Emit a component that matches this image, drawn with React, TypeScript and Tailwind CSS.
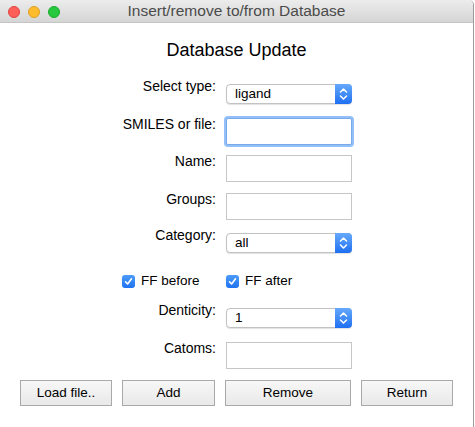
import React from "react";

const font = { fontFamily: '"Liberation Sans", Arial, sans-serif' };

function Select({ value }: { value: string }) {
  return (
    <div className="relative h-[20px] w-[126px] rounded-[4px] border border-[#c2c2c2] bg-white shadow-[0_1px_1px_rgba(0,0,0,0.12)] flex items-center">
      <span className="pl-[8px] text-[13.5px] leading-[16px] text-black">{value}</span>
      <div className="absolute right-[-1px] top-[-1px] h-[20px] w-[17px] rounded-r-[4px] bg-gradient-to-b from-[#65a9fb] to-[#1d6ff2] flex items-center justify-center">
        <svg width="9" height="14" viewBox="0 0 9 14" fill="none">
          <path d="M1.5 5 L4.5 2 L7.5 5" stroke="white" strokeWidth="1.5" strokeLinecap="round" strokeLinejoin="round" />
          <path d="M1.5 9 L4.5 12 L7.5 9" stroke="white" strokeWidth="1.5" strokeLinecap="round" strokeLinejoin="round" />
        </svg>
      </div>
    </div>
  );
}

function Input({ focused }: { focused?: boolean }) {
  return focused ? (
    <div className="h-[27px] w-[126px] rounded-[2px] border border-[#7aa9ea] bg-white shadow-[0_0_0_2px_#93c0f8]" />
  ) : (
    <div className="h-[27px] w-[126px] border border-[#c6c6c6] bg-white" />
  );
}

function Row({
  label,
  children,
  mt,
  select,
}: {
  label: string;
  children: React.ReactNode;
  mt: string;
  select?: boolean;
}) {
  return (
    <div className={`grid grid-cols-[196px_126px] gap-x-[10px] items-start pl-[20px] ${mt}`}>
      <div
        className={`text-right text-[14px] leading-[16px] text-black ${
          select ? "-mt-[6px]" : "-mt-[2px]"
        }`}
      >
        {label}
      </div>
      {children}
    </div>
  );
}

function Check({ label }: { label: string }) {
  return (
    <div className="flex items-center gap-[6px]">
      <div className="h-[13px] w-[13px] rounded-[3px] bg-gradient-to-b from-[#4b9bfa] to-[#1f73f1] flex items-center justify-center">
        <svg width="9" height="9" viewBox="0 0 9 9" fill="none">
          <path d="M1.5 4.8 L3.6 7 L7.5 1.8" stroke="white" strokeWidth="1.6" strokeLinecap="round" strokeLinejoin="round" />
        </svg>
      </div>
      <span className="text-[13.5px] leading-[16px] text-black">{label}</span>
    </div>
  );
}

function Btn({ label }: { label: string }) {
  return (
    <div className="h-[26px] border border-[#a9a9a9] bg-gradient-to-b from-[#f7f7f7] to-[#e9e9e9] flex items-center justify-center text-[13.5px] text-black">
      {label}
    </div>
  );
}

export default function App() {
  return (
    <div style={font} className="w-[475px] h-[427px] bg-white overflow-hidden">
      <div className="w-[474px] h-[427px] border-r border-[#9d9d9d] rounded-tr-[5px] bg-white flex flex-col">
        <div className="relative h-[23px] border-b border-[#c4c4c4] bg-gradient-to-b from-[#ececec] to-[#d5d5d5] rounded-tr-[5px] flex items-center justify-center">
          <div className="absolute left-[8px] top-[6px] flex gap-[8px]">
            <div className="h-[12px] w-[12px] rounded-full bg-[#fc5f57] border border-[#e0443e]" />
            <div className="h-[12px] w-[12px] rounded-full bg-[#fdbc2e] border border-[#dea123]" />
            <div className="h-[12px] w-[12px] rounded-full bg-[#28c840] border border-[#1aab29]" />
          </div>
          <span className="text-[15.5px] leading-[18px] text-[#4b4b4b]">Insert/remove to/from Database</span>
        </div>

        <div className="mt-[17px] text-center text-[18px] leading-[20px] text-black">Database Update</div>

        <Row label="Select type:" mt="mt-[24px]" select>
          <Select value="ligand" />
        </Row>
        <Row label="SMILES or file:" mt="mt-[14px]">
          <Input focused />
        </Row>
        <Row label="Name:" mt="mt-[10px]">
          <Input />
        </Row>
        <Row label="Groups:" mt="mt-[11px]">
          <Input />
        </Row>
        <Row label="Category:" mt="mt-[13px]" select>
          <Select value="all" />
        </Row>

        <div className="mt-[20px] grid grid-cols-[94px_126px] gap-x-[10px] pl-[122px]">
          <Check label="FF before" />
          <Check label="FF after" />
        </div>

        <Row label="Denticity:" mt="mt-[19px]" select>
          <Select value="1" />
        </Row>
        <Row label="Catoms:" mt="mt-[14px]">
          <Input />
        </Row>

        <div className="mt-[11px] grid grid-cols-[92px_93px_126px_92px] gap-x-[10px] pl-[20px]">
          <Btn label="Load file.." />
          <Btn label="Add" />
          <Btn label="Remove" />
          <Btn label="Return" />
        </div>
      </div>
    </div>
  );
}
